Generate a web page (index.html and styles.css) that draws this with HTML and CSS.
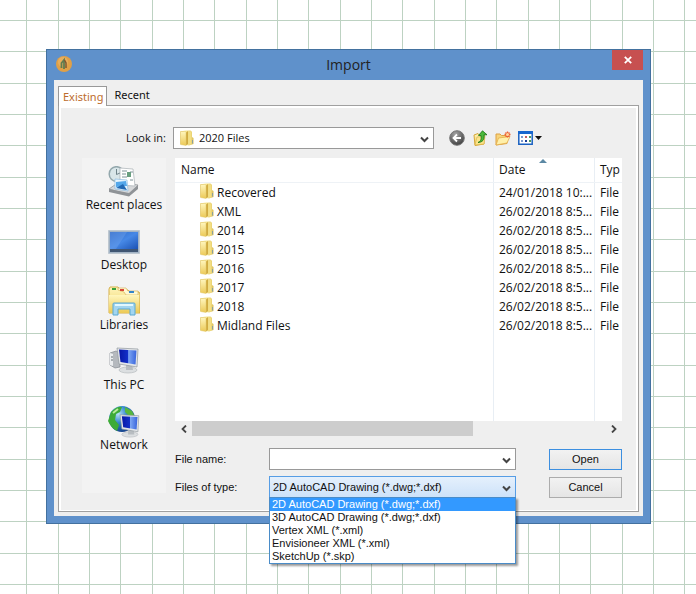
FILE: index.html
```html
<!DOCTYPE html>
<html lang="en">
<head>
<meta charset="utf-8">
<title>Import</title>
<link rel="stylesheet" href="styles.css">
</head>
<body>
<svg class="defs" width="0" height="0" aria-hidden="true">
  <defs>
    <linearGradient id="gold" x1="0" x2="1" y1="0" y2="0"><stop offset="0" stop-color="#d9b64c"/><stop offset=".35" stop-color="#fbf0a4"/><stop offset="1" stop-color="#dcbf5a"/></linearGradient>
    <linearGradient id="goldv" x1="0" x2="0" y1="0" y2="1"><stop offset="0" stop-color="#fff6bd"/><stop offset="1" stop-color="#ecc955"/></linearGradient>
    <linearGradient id="desk" x1="0" x2="1" y1="0" y2="1"><stop offset="0" stop-color="#2f67c4"/><stop offset=".5" stop-color="#4688e6"/><stop offset="1" stop-color="#1c52b4"/></linearGradient>
    <linearGradient id="screen" x1="0" x2="1" y1="0" y2="0"><stop offset="0" stop-color="#0717a5"/><stop offset=".5" stop-color="#1230c8"/><stop offset=".55" stop-color="#7ba4f2"/><stop offset="1" stop-color="#3763dc"/></linearGradient>
    <radialGradient id="globe" cx=".35" cy=".3" r=".75"><stop offset="0" stop-color="#b8e4f8"/><stop offset=".45" stop-color="#3487cc"/><stop offset="1" stop-color="#123c86"/></radialGradient>
    <radialGradient id="steel" cx=".4" cy=".25" r=".8"><stop offset="0" stop-color="#a5a5a5"/><stop offset="1" stop-color="#3b3b3b"/></radialGradient>
    <symbol id="folder" viewBox="0 0 14 16">
      <path d="M.5 1.500 5.500.5h5L12 2v5l1.500 1v6L9 15.500.5 14z" fill="url(#gold)"/>
      <path d="M6 2.500 8 1v13l-2 1.500z" fill="#d0ab40"/>
      <path d="M.5 1.500H6v14L.5 14.500z" fill="url(#goldv)" stroke="#e3c96f" stroke-width=".5"/>
      <path d="M8.500 1.500h3v13h-3z" fill="#f3de83"/>
      <path d="M12.500 10v3.500" stroke="#8ba09c"/>
    </symbol>
    <symbol id="chevron" viewBox="0 0 9 7"><path d="M1 1.500 4.500 5 8 1.500" fill="none" stroke="#444" stroke-width="2"/></symbol>
    <symbol id="monitor" viewBox="0 0 24 28">
      <ellipse cx="13" cy="24" rx="9" ry="3" fill="#dcdfe1" stroke="#aeb3b7" stroke-width=".6"/>
      <path d="M11 18h6l1 6h-7z" fill="#b8bdc1"/>
      <path d="m2 2 21 1-1 18-18-3z" fill="#e3e6e9" stroke="#8f969c" stroke-width=".7"/>
      <path d="m4 3.500 17.500 1-1 14L5.500 16z" fill="url(#screen)"/>
    </symbol>
  </defs>
</svg>
<main class="dialog">
  <header class="titlebar">
    <svg class="app-icon" viewBox="0 0 16 16" aria-hidden="true"><circle cx="8" cy="8" r="8" fill="#e0a047"/><circle cx="7" cy="6" r="5" fill="#e8ae5c"/><path d="M5.500 12V7L8 4v9" fill="none" stroke="#5f7d52" stroke-width="1.800"/><path d="m8.500 4 1.500 3v5" fill="none" stroke="#7e5832" stroke-width="1.500"/></svg>
    <h1>Import</h1>
    <button class="close" type="button" aria-label="Close"><svg viewBox="0 0 8 8" width="8" height="8"><path d="m.8.8 6.400 6.400m0-6.400L.8 7.200" stroke="#fff" stroke-width="1.800"/></svg></button>
  </header>
  <div class="client">
    <nav class="tabs" role="tablist">
      <button class="tab active" type="button" role="tab" aria-selected="true">Existing</button>
      <button class="tab" type="button" role="tab" aria-selected="false">Recent</button>
    </nav>
    <form class="panel">
      <label class="look-label" for="look">Look in:</label>
      <div class="look-row">
        <div class="combo look">
          <select id="look"><option>2020 Files</option></select>
          <svg class="combo-folder" aria-hidden="true"><use href="#folder"/></svg>
          <svg class="arrow" aria-hidden="true"><use href="#chevron"/></svg>
        </div>
        <div class="tools">
          <button type="button" aria-label="Back"><svg viewBox="0 0 16 16" width="16" height="16"><circle cx="8" cy="8" r="7.300" fill="url(#steel)" stroke="#777"/><path d="M12 8H5m3-3.500L4.500 8 8 11.500" fill="none" stroke="#fff" stroke-width="1.800"/></svg></button>
          <button type="button" aria-label="Up one level"><svg viewBox="0 0 16 16" width="16" height="16"><path d="M2 5 6 3.500l1 1.500 5-1v10l-9 1.500z" fill="url(#goldv)" stroke="#d6a638"/><path d="m3 15 2-8 8-1-1 8z" fill="#fbe58c" stroke="#d9ad42" stroke-width=".6"/><path d="M6 12.500c3-1 3.500-3 3-7H6.500L10.500.8l4.500 4H12c.7 5-1.500 7.500-6 7.700z" fill="#4bb83b" stroke="#187313" stroke-width=".8"/></svg></button>
          <button type="button" aria-label="New folder"><svg viewBox="0 0 16 16" width="16" height="16"><path d="M1 4h4l1.500 1.500H12v8L1 15z" fill="#f7d47c" stroke="#dda043"/><path d="m1 15 2.500-7L15 6.500 12 13z" fill="#fff0aa" stroke="#e3ad4a" stroke-width=".8"/><path d="M12.500 1.500v6M9.500 4.500h6M10.500 2.500l4 4m0-4-4 4" stroke="#ec6336" stroke-width="1.300"/><circle cx="12.500" cy="4.500" r="1.500" fill="#ffd59b"/></svg></button>
          <button type="button" aria-label="View menu"><svg viewBox="0 0 24 16" width="24" height="16"><path d="M.8 1.800h13.400v12.400H.8z" fill="#fff" stroke="#1a61c1" stroke-width="1.500"/><path d="M0 1h15v3H0z" fill="#1767cf"/><path d="M3 6h2v2H3zm0 4h2v2H3z" fill="#7999cf"/><path d="M7 6h2v2H7z" fill="#c45e62"/><path d="M7 10h2v2H7z" fill="#1b3e98"/><path d="M11 6h2v2h-2zm0 4h2v2h-2z" fill="#4d9a5a"/><path d="M17 6h7l-3.500 4z" fill="#111"/></svg></button>
        </div>
      </div>

      <nav class="places" aria-label="Places">
        <a href="#recent"><svg viewBox="0 0 32 32" aria-hidden="true"><circle cx="8.500" cy="8" r="7.300" fill="#d9e6e9" stroke="#94a8ad" stroke-width="1.500"/><path d="M8.500 3v5.500L12 7" fill="none" stroke="#6f8389"/><path d="m1 23 10-7 19 3-8 10z" fill="#d6d8da" stroke="#898d91" stroke-width=".7"/><path d="m1 23 20 4 9-8v4l-9 7.500L1 26z" fill="#8f9397"/><path d="m12 2 13 1 2 17-15-1z" fill="#fff" stroke="#a9b0b5" stroke-width=".7"/><path d="M14 5h5m-5 3h4m-4 3h5m3-5h3m-3 8h3" stroke="#7e9399"/><path d="M19 6h4v5h-4z" fill="#6a9f80"/><path d="m7 13 12 1 1 11-13-2z" fill="#e9f6ff" stroke="#8ebbe0" stroke-width=".7"/><path d="m8 16 10-1 1 5-11 1z" fill="#54a7ea"/><path d="m8 22 7-4 4 6z" fill="#2369b3"/></svg><span>Recent places</span></a>
        <a href="#desktop"><svg viewBox="0 0 32 32" aria-hidden="true"><path d="M.5 4.500h31v23H.5z" fill="#a2b3c5" stroke="#bdc7d0"/><path d="M2 6h28v17H2z" fill="url(#desk)"/><path d="M2 6h17L8 23H2z" fill="#79a9ee" opacity=".35"/><path d="M2 23h28v3H2z" fill="#405673"/></svg><span>Desktop</span></a>
        <a href="#libraries"><svg viewBox="0 0 32 32" aria-hidden="true"><path d="M1 27V3l1-2h8l2 3h8l1 2h10l1 2v19z" fill="url(#goldv)" stroke="#d5ae49"/><path d="M10 4V2h8l2 3h10v4H18l-2-3z" fill="#fff9d3" stroke="#d1aa49" stroke-width=".6"/><path d="M1 9h30v18H1z" fill="url(#goldv)"/><path d="M4 2h4v2H4z" fill="#38a13c"/><path d="M12 3h4v2h-4z" fill="#d84838"/><path d="M21 5h5v2h-5z" fill="#3385ca"/><path d="M5 29V18q0-1 1-1h20q1 0 1 1v11h-5v-6H10v6z" fill="#a3d5ef" stroke="#5aa9d2"/><path d="M7 19h18" stroke="#e1f8ff" stroke-width="2"/></svg><span>Libraries</span></a>
        <a href="#pc"><svg viewBox="0 0 32 32" aria-hidden="true"><path d="m2 7 6-2 4 2v14l-5 1-5-3z" fill="#b5b9be" stroke="#858b92" stroke-width=".7"/><path d="m2 7 3 1v12l-3-1z" fill="#ebedef"/><path d="M3 11h2m-2 3h2" stroke="#697279"/><use href="#monitor" x="7" y="0" width="24" height="28"/></svg><span>This PC</span></a>
        <a href="#network"><svg viewBox="0 0 32 32" aria-hidden="true"><circle cx="14" cy="13" r="13" fill="url(#globe)"/><path d="M3 6q6-6 11-5l-2 5-4 2-1 6 4 5-2 6q-6-3-9-10z" fill="#3dab37"/><path d="m17 1 7 4 3 6-6-1-4-4z" fill="#57b73d"/><path d="m5 7 5-4" stroke="#b8ec9a" stroke-width="2"/><use href="#monitor" x="10" y="7" width="22" height="25"/></svg><span>Network</span></a>
      </nav>

      <div class="files">
        <div class="list">
          <table>
            <colgroup><col><col class="date"><col class="type"></colgroup>
            <thead><tr><th>Name</th><th>Date<svg class="sort" viewBox="0 0 8 4" aria-hidden="true"><path d="m0 4 4-4 4 4z" fill="#5b88a4"/></svg></th><th>Typ</th></tr></thead>
            <tbody>
              <tr><td><svg aria-hidden="true"><use href="#folder"/></svg>Recovered</td><td>24/01/2018 10:...</td><td>File</td></tr>
              <tr><td><svg aria-hidden="true"><use href="#folder"/></svg>XML</td><td>26/02/2018 8:5...</td><td>File</td></tr>
              <tr><td><svg aria-hidden="true"><use href="#folder"/></svg>2014</td><td>26/02/2018 8:5...</td><td>File</td></tr>
              <tr><td><svg aria-hidden="true"><use href="#folder"/></svg>2015</td><td>26/02/2018 8:5...</td><td>File</td></tr>
              <tr><td><svg aria-hidden="true"><use href="#folder"/></svg>2016</td><td>26/02/2018 8:5...</td><td>File</td></tr>
              <tr><td><svg aria-hidden="true"><use href="#folder"/></svg>2017</td><td>26/02/2018 8:5...</td><td>File</td></tr>
              <tr><td><svg aria-hidden="true"><use href="#folder"/></svg>2018</td><td>26/02/2018 8:5...</td><td>File</td></tr>
              <tr><td><svg aria-hidden="true"><use href="#folder"/></svg>Midland Files</td><td>26/02/2018 8:5...</td><td>File</td></tr>
            </tbody>
          </table>
        </div>
        <div class="scrollbar">
          <button type="button" aria-label="Scroll left"><svg viewBox="0 0 6 8" width="6" height="8"><path d="M5 .5 1.500 4 5 7.500" fill="none" stroke="#444" stroke-width="1.800"/></svg></button>
          <div class="track"><div class="thumb"></div></div>
          <button type="button" aria-label="Scroll right"><svg viewBox="0 0 6 8" width="6" height="8"><path d="M1 .5 4.500 4 1 7.500" fill="none" stroke="#444" stroke-width="1.800"/></svg></button>
        </div>
        <div class="fields">
          <label for="name">File name:</label>
          <div class="combo"><input id="name" type="text"><svg class="arrow" aria-hidden="true"><use href="#chevron"/></svg></div>
          <button class="push default" type="submit">Open</button>
          <label for="kind">Files of type:</label>
          <div class="combo kind">
            <select id="kind"><option>2D AutoCAD Drawing (*.dwg;*.dxf)</option></select>
            <svg class="arrow" aria-hidden="true"><use href="#chevron"/></svg>
            <ul class="menu" role="listbox" aria-label="Files of type">
              <li role="option" aria-selected="true">2D AutoCAD Drawing (*.dwg;*.dxf)</li>
              <li role="option">3D AutoCAD Drawing (*.dwg;*.dxf)</li>
              <li role="option">Vertex XML (*.xml)</li>
              <li role="option">Envisioneer XML (*.xml)</li>
              <li role="option">SketchUp (*.skp)</li>
            </ul>
          </div>
          <button class="push" type="button">Cancel</button>
        </div>
      </div>
    </form>
  </div>
</main>
</body>
</html>
```
FILE: styles.css
```css
* { box-sizing: border-box; }
body {
  margin: 0;
  padding: 49px 45px 70px 46px;
  background-color: #fff;
  background-image:
    linear-gradient(90deg, #bdd2c2 1px, transparent 1px),
    linear-gradient(90deg, #bdd2c2 1px, transparent 1px),
    linear-gradient(90deg, #bdd2c2 1px, transparent 1px),
    linear-gradient(#bdd2c2 1px, transparent 1px),
    linear-gradient(#bdd2c2 1px, transparent 1px),
    linear-gradient(#bdd2c2 1px, transparent 1px);
  background-size: 94px 94px;
  background-position: 26px 0, 58px 0, 89px 0, 0 20px, 0 51px, 0 83px;
  font: 12px/14px "Open Sans", sans-serif;
  color: #111;
}
.defs { position: absolute; }
button, input, select { margin: 0; padding: 0; border: 0; border-radius: 0; font: inherit; color: inherit; background: none; }

.dialog { padding: 0 7px 7px; border: 1px solid #43719f; background: #5f91cb; }
.titlebar { display: grid; grid-template-columns: 31px 1fr 31px; height: 30px; }
.app-icon { width: 16px; height: 16px; margin: 6px 0 0 2px; }
.titlebar h1 { margin: 0; font: 14px/30px "Open Sans", sans-serif; text-align: center; color: #222; }
.close { height: 20px; background: #c75050; display: grid; place-items: center; }

.client { padding: 6px 4px 4px; background: #efefef; }
.tabs { display: flex; align-items: flex-start; height: 19px; }
.tab { height: 19px; padding: 0 7px 2px; font: 11px/16px "Noto Sans", sans-serif; }
.tab.active { position: relative; height: 20px; padding: 0 3px 0 4px; border: 1px solid #999; border-bottom: 0; background: #fff; color: #bd6c2d; }

.panel {
  display: grid;
  grid-template-columns: 84px 1fr;
  column-gap: 9px;
  padding: 19px 14px 12px 21px;
  border: solid #fff;
  border-width: 3px 3px 2px 3px;
  outline: 1px solid #a0a0a0;
  outline-offset: -1px;
}
.look-label { text-align: right; font-size: 11px; line-height: 22px; }
.look-row { display: flex; gap: 15px; margin: 0 0 9px -2px; }
.combo { position: relative; display: flex; height: 22px; border: 1px solid #999; background: #fff; }
.combo select, .combo input { flex: 1; min-width: 0; appearance: none; padding: 0 20px 0 3px; outline: 0; }
.combo.look { flex: 0 1 261px; }
.combo.look select { padding-left: 25px; font-size: 11px; }
.combo-folder { position: absolute; left: 6px; top: 2px; width: 14px; height: 16px; }
.arrow { position: absolute; right: 4px; top: 8px; width: 9px; height: 7px; pointer-events: none; }
.tools { display: flex; align-items: center; gap: 7px; }
.tools button { display: flex; }

.places { display: flex; flex-direction: column; gap: 14px; margin-bottom: 5px; padding-top: 8px; background: #f3f3f3; }
.places a { display: flex; flex-direction: column; align-items: center; color: inherit; text-decoration: none; white-space: nowrap; }
.places svg { width: 32px; height: 32px; }

.files { min-width: 0; }
.list { height: 263px; overflow: hidden; background:
  linear-gradient(#e8eef4, #e8eef4) right 128px top / 1px 100% no-repeat,
  linear-gradient(#e8eef4, #e8eef4) right 27px top / 1px 100% no-repeat, #fff; }
table { width: 100%; table-layout: fixed; border-collapse: collapse; }
.date { width: 101px; }
.type { width: 29px; }
th, td { height: 19px; padding: 0 0 0 7px; font-weight: 400; line-height: 19px; text-align: left; white-space: nowrap; overflow: hidden; }
th { position: relative; height: 24px; border-bottom: 1px solid #eef2f6; }
th:first-child { padding-left: 6px; }
td:first-child { padding-left: 25px; }
td svg { width: 14px; height: 16px; margin-right: 3px; vertical-align: top; }
.sort { position: absolute; left: 47px; top: 1px; width: 8px; height: 4px; }
.scrollbar { display: flex; height: 16px; }
.scrollbar button { width: 17px; display: grid; place-items: center; }
.track { flex: 1; }
.thumb { width: 68%; height: 15px; background: #cdcdcd; }

.fields {
  display: grid;
  grid-template-columns: 94px 1fr 73px;
  row-gap: 6px;
  margin-top: 11px;
  align-items: center;
  font: 11px/13px "Liberation Sans", sans-serif;
}
.fields .combo { margin-right: 33px; }
.combo.kind { border-color: #569de5; background: linear-gradient(#e5f0fc, #cde2f9); }
.menu { position: absolute; z-index: 1; top: 20px; left: -1px; right: -1px; margin: 0; padding: 0; list-style: none; border: 1px solid #4a8cc8; background: #fff; box-shadow: 2px 2px 2px #0006; }
.menu li { padding-left: 2px; }
.menu li[aria-selected="true"] { background: #3399ff; color: #fff; }
.push { height: 21px; border: 1px solid #acacac; background: linear-gradient(#f2f2f2, #e5e5e5); }
.push.default { border-color: #3c8fe0; }
```
